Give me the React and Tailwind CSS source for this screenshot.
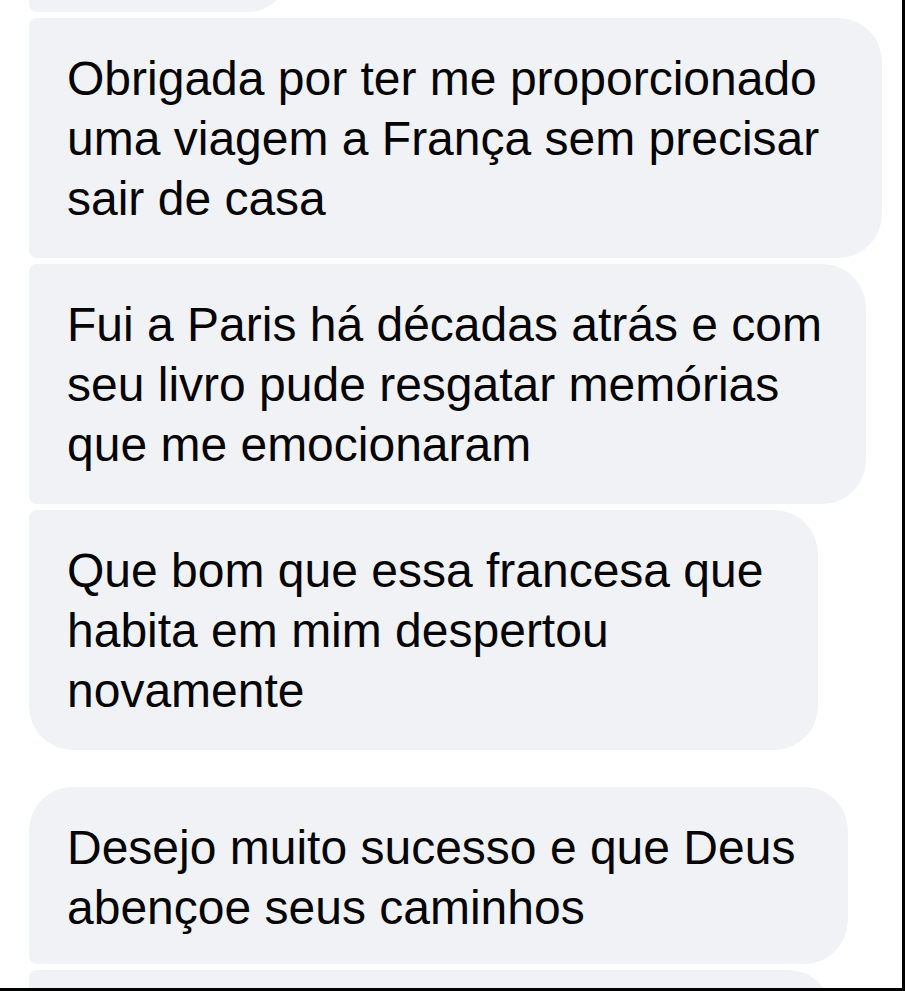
// Chat bubbles screenshot
const messages = [
  {
    lines: ["Obrigada por ter me proporcionado", "uma viagem a França sem precisar", "sair de casa"],
    w: "w-[853px]",
    shape: "rounded-l-[8px] rounded-r-[44px]",
    gap: "mt-[6px] pb-[29px]",
  },
  {
    lines: ["Fui a Paris há décadas atrás e com", "seu livro pude resgatar memórias", "que me emocionaram"],
    w: "w-[837px]",
    shape: "rounded-l-[8px] rounded-r-[44px]",
    gap: "mt-[6px] pb-[29px]",
  },
  {
    lines: ["Que bom que essa francesa que", "habita em mim despertou", "novamente"],
    w: "w-[789px]",
    shape: "rounded-tl-[8px] rounded-bl-[44px] rounded-r-[44px]",
    gap: "mt-[6px] pb-[29px]",
  },
  {
    lines: ["Desejo muito sucesso e que Deus", "abençoe seus caminhos"],
    w: "w-[819px]",
    shape: "rounded-tl-[44px] rounded-bl-[8px] rounded-r-[44px]",
    gap: "mt-[37px] pb-[26px]",
  },
];

function Bubble({ m }) {
  return (
    <div className={`${m.gap} ${m.w} ${m.shape} bg-[#f0f2f5] pl-[38px] pt-[31px]`}>
      {m.lines.map((l) => (
        <div key={l} className="whitespace-nowrap text-[48px] leading-[60px] text-[#050505]">
          {l}
        </div>
      ))}
    </div>
  );
}

export default function App() {
  return (
    <div
      className="w-[905px] h-[991px] overflow-hidden bg-white border-r-[3px] border-b-[3px] border-black"
      style={{ fontFamily: "'Liberation Sans', Arial, sans-serif" }}
    >
      <div className="pl-[29px] flex flex-col items-start">
        {/* previous bubble, cut off at the top */}
        <div className="-mt-[88px] h-[100px] w-[262px] bg-[#f0f2f5] rounded-l-[8px] rounded-r-[44px]" />
        {messages.map((m, i) => (
          <Bubble key={i} m={m} />
        ))}
        {/* next bubble, cut off at the bottom */}
        <div className="mt-[6px] h-[100px] w-[803px] bg-[#f0f2f5] rounded-tl-[8px] rounded-r-[44px]" />
      </div>
    </div>
  );
}
